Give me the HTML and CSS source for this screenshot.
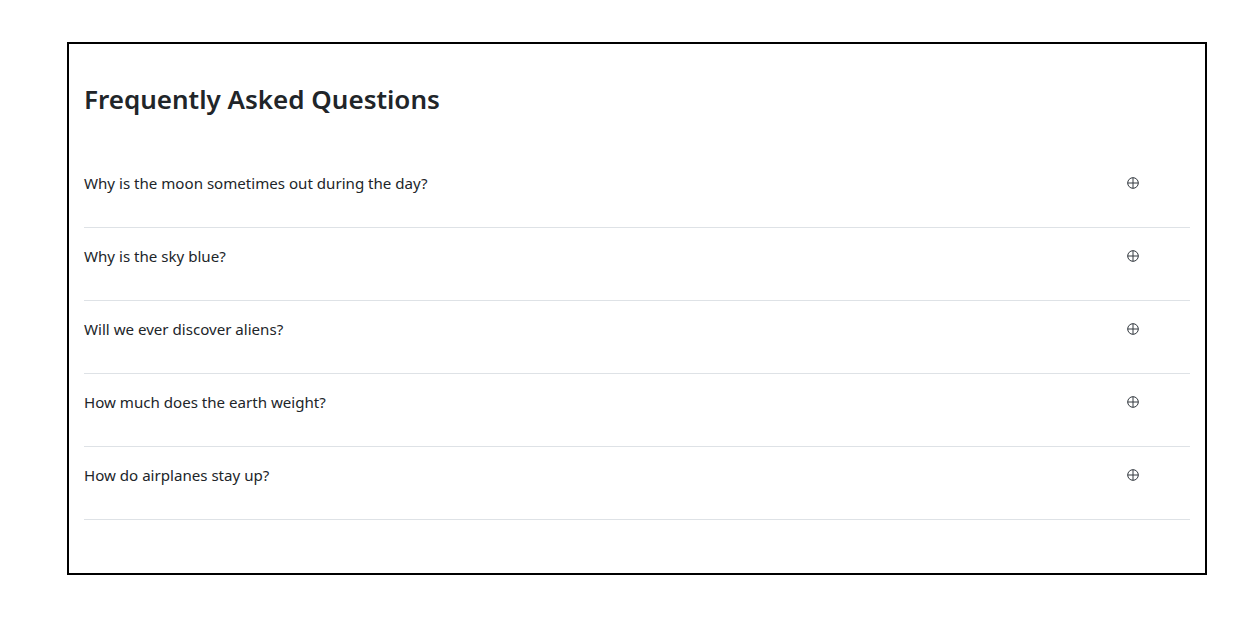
FILE: index.html
```html
<!DOCTYPE html>
<html lang="en">
<head>
<meta charset="utf-8">
<title>FAQ</title>
<link rel="stylesheet" href="styles.css">
</head>
<body>
<main class="faq">
  <h2 class="faq-title">Frequently Asked Questions</h2>
  <ul class="faq-list">
    <li class="faq-item"><span class="faq-q">Why is the moon sometimes out during the day?</span><svg class="faq-icon" viewBox="0 0 12 12" width="12" height="12"><circle cx="6" cy="6" r="5.3"/><path d="M6 0.7V11.3M0.7 6H11.3"/></svg></li>
    <li class="faq-item"><span class="faq-q">Why is the sky blue?</span><svg class="faq-icon" viewBox="0 0 12 12" width="12" height="12"><circle cx="6" cy="6" r="5.3"/><path d="M6 0.7V11.3M0.7 6H11.3"/></svg></li>
    <li class="faq-item"><span class="faq-q">Will we ever discover aliens?</span><svg class="faq-icon" viewBox="0 0 12 12" width="12" height="12"><circle cx="6" cy="6" r="5.3"/><path d="M6 0.7V11.3M0.7 6H11.3"/></svg></li>
    <li class="faq-item"><span class="faq-q">How much does the earth weight?</span><svg class="faq-icon" viewBox="0 0 12 12" width="12" height="12"><circle cx="6" cy="6" r="5.3"/><path d="M6 0.7V11.3M0.7 6H11.3"/></svg></li>
    <li class="faq-item"><span class="faq-q">How do airplanes stay up?</span><svg class="faq-icon" viewBox="0 0 12 12" width="12" height="12"><circle cx="6" cy="6" r="5.3"/><path d="M6 0.7V11.3M0.7 6H11.3"/></svg></li>
  </ul>
</main>
</body>
</html>
```
FILE: styles.css
```css
html, body {
  margin: 0;
  padding: 0;
  background: #fff;
}
body {
  padding: 42px 0 0 67px;
  font-family: "Noto Sans", "Open Sans", sans-serif;
  color: #212529;
}
.faq {
  box-sizing: border-box;
  width: 1140px;
  height: 533px;
  border: 2px solid #000;
  padding: 38px 15px 0 15px;
}
.faq-title {
  margin: 0 0 39px 0;
  font-size: 26px;
  font-weight: 600;
  line-height: 34px;
}
.faq-list {
  list-style: none;
  margin: 0;
  padding: 0;
}
.faq-item {
  display: flex;
  align-items: center;
  height: 72px;
  box-sizing: content-box;
  border-bottom: 1px solid #dee2e6;
  padding-bottom: 0;
}
.faq-q {
  flex: 1;
  font-size: 15.1px;
  line-height: 24px;
  padding-bottom: 16px;
}
.faq-icon {
  margin: 0 51px 16px 0;
  fill: none;
  stroke: #343a40;
  stroke-width: 1;
}
```
